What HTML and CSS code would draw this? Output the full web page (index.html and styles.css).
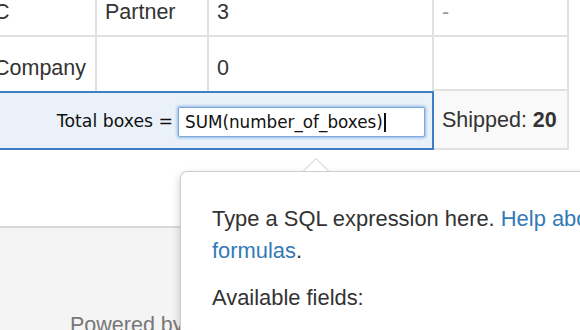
FILE: index.html
```html
<!DOCTYPE html>
<html>
<head>
<meta charset="utf-8">
<link rel="stylesheet" href="styles.css">
</head>
<body>
<div class="page">
  <div class="table-wrap">
    <table class="data">
      <colgroup>
        <col class="c1"><col class="c2"><col class="c3"><col class="c4">
      </colgroup>
      <tbody>
        <tr>
          <td>C</td>
          <td>Partner</td>
          <td>3</td>
          <td class="muted">-</td>
        </tr>
        <tr>
          <td class="above-total">Company</td>
          <td class="above-total"></td>
          <td class="above-total">0</td>
          <td></td>
        </tr>
        <tr>
          <td class="total" colspan="3">
            <div class="total-inner">
              <span class="total-label">Total boxes =</span>
              <div class="formula-input" role="textbox">SUM(number_of_boxes)<span class="caret"></span></div>
            </div>
          </td>
          <td class="shipped">Shipped: <b>20</b></td>
        </tr>
      </tbody>
    </table>
  </div>
  <footer class="footer">Powered by Airtable</footer>
  <div class="popover">
    <div class="arrow"></div>
    <div class="popover-content">
      <p>Type a SQL expression here. <a href="#">Help about formulas</a>.</p>
      <p>Available fields:</p>
    </div>
  </div>
</div>
</body>
</html>
```

FILE: styles.css
```css
html, body {
  margin: 0;
  padding: 0;
}
body {
  width: 580px;
  height: 330px;
  overflow: hidden;
  background: #fff;
  font-family: "Liberation Sans", Arial, sans-serif;
  font-size: 21.5px;
  color: #333;
}
.page {
  position: relative;
  width: 580px;
  height: 330px;
  overflow: hidden;
}
.table-wrap {
  margin-left: -14px;
  margin-top: -19px;
}
.data {
  border-collapse: separate;
  border-spacing: 0;
  table-layout: fixed;
  width: 583px;
}
.c1 { width: 111px; }
.c2 { width: 112px; }
.c3 { width: 225px; }
.c4 { width: 135px; }
.data td {
  border-right: 2px solid #e1e1e1;
  border-bottom: 2px solid #e1e1e1;
  padding: 16px 8px 8px;
  line-height: 30px;
  vertical-align: top;
  white-space: nowrap;
  overflow: hidden;
}
.data td.above-total {
  border-bottom: 0;
}
.data td.muted {
  color: #999;
}
.data td.total {
  border: 2px solid #3d7fc6;
  border-left: 0;
  background: #eaf1f9;
  padding: 14px 7px 11px 8px;
}
.total-inner {
  display: flex;
  justify-content: flex-end;
  align-items: center;
  height: 30px;
  gap: 5px;
}
.total-label {
  font-family: "DejaVu Sans", Verdana, sans-serif;
  font-size: 17.3px;
  color: #111;
  line-height: 1;
}
.formula-input {
  box-sizing: border-box;
  width: 247px;
  height: 30px;
  border: 1px solid #7fa9d6;
  border-radius: 2px;
  background: #fff;
  box-shadow: 0 0 3px 1px rgba(102, 160, 225, 0.7);
  padding: 0 6px;
  font-family: "DejaVu Sans", Verdana, sans-serif;
  font-size: 16.8px;
  color: #111;
  line-height: 28px;
  display: flex;
  align-items: center;
}
.caret {
  display: inline-block;
  width: 2px;
  height: 19px;
  background: #111;
  margin-left: 1px;
}
.data td.shipped {
  background: #f9f9f9;
  vertical-align: middle;
  padding: 0 8px;
}
.shipped b {
  font-weight: bold;
}
.footer {
  margin-top: 76px;
  height: 140px;
  box-sizing: border-box;
  border-top: 2px solid #d8d8d8;
  background: #f4f4f4;
  color: #777;
  padding: 82px 0 0 70px;
  line-height: 30px;
}
.popover {
  position: absolute;
  left: 180px;
  top: 171px;
  width: 480px;
  height: 220px;
  background: #fff;
  border: 1px solid rgba(0, 0, 0, 0.2);
  border-radius: 7px;
  box-shadow: 0 4px 10px rgba(0, 0, 0, 0.2);
}
.arrow {
  position: absolute;
  left: 122px;
  top: -14px;
  width: 0;
  height: 0;
  border-left: 13px solid transparent;
  border-right: 13px solid transparent;
  border-bottom: 13px solid rgba(0, 0, 0, 0.22);
}
.arrow::after {
  content: "";
  position: absolute;
  left: -12px;
  top: 1px;
  border-left: 12px solid transparent;
  border-right: 12px solid transparent;
  border-bottom: 12px solid #fff;
}
.popover-content {
  padding: 31px 0 0 31px;
  line-height: 31.5px;
  font-size: 21.9px;
  color: #333;
}
.popover-content p {
  margin: 0 0 16px;
  width: 420px;
}
.popover-content a {
  color: #337ab7;
  text-decoration: none;
}
```
